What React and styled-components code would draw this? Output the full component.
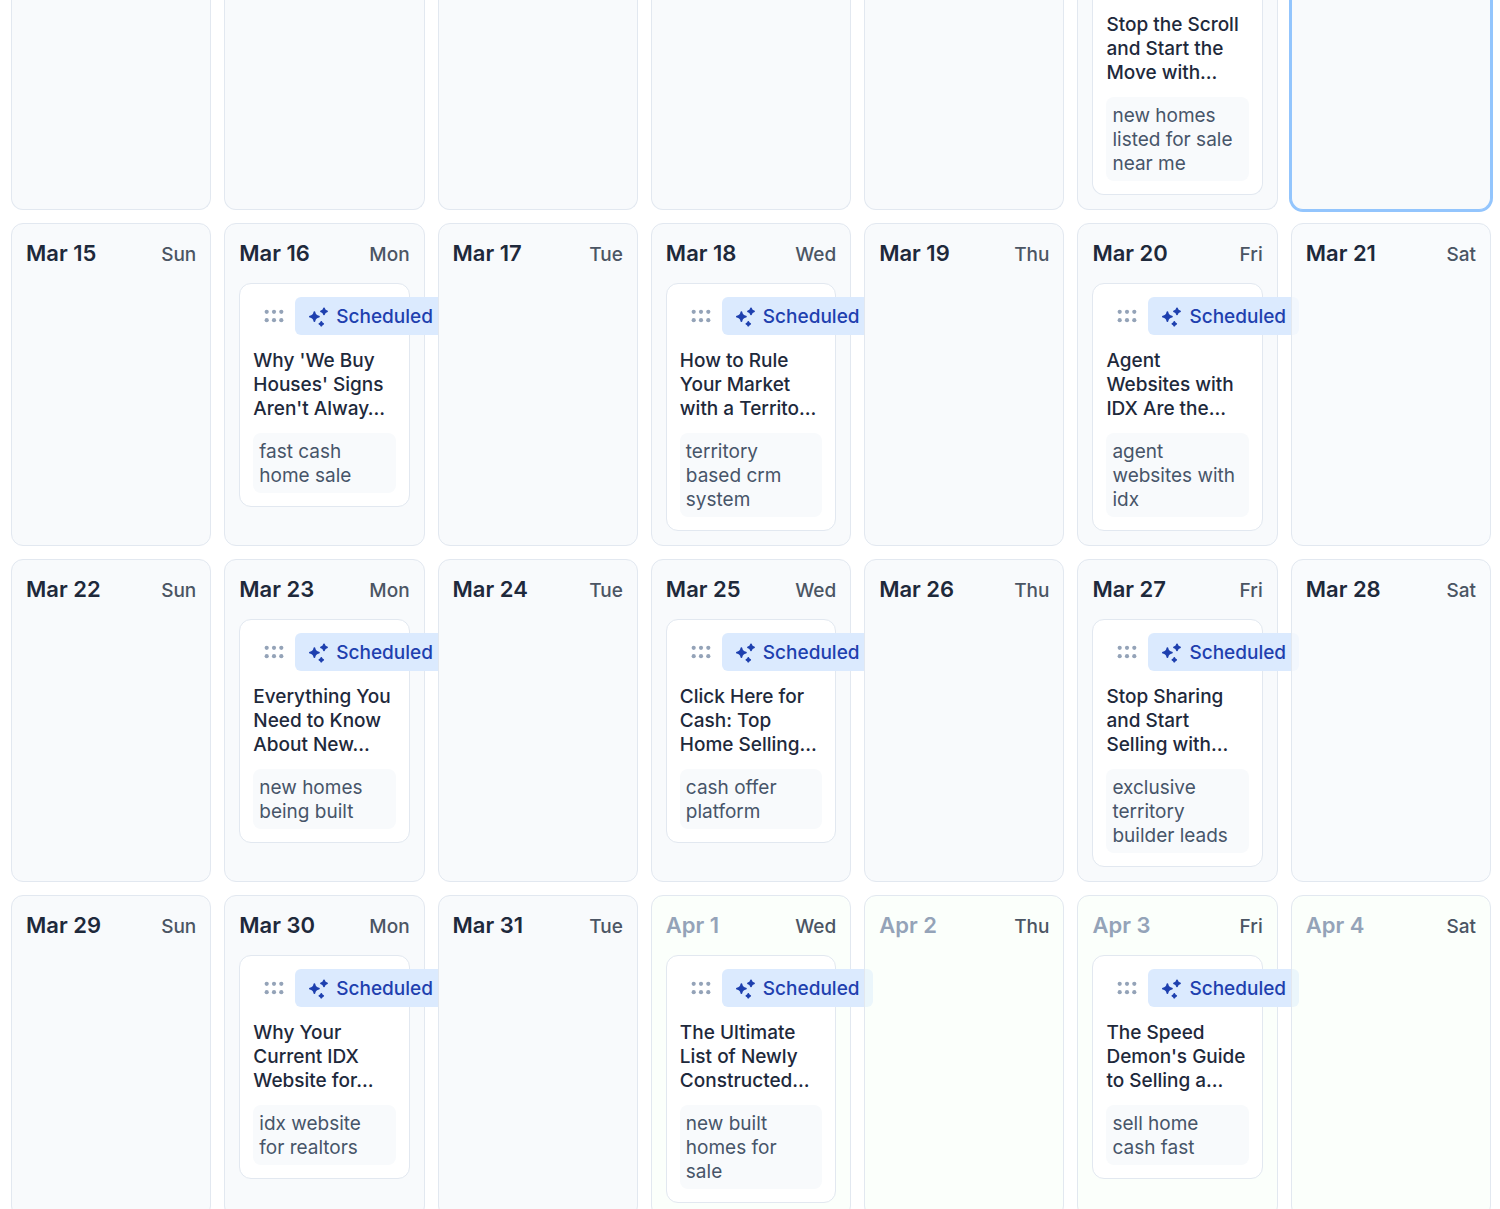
import React from 'react'
import styled, { createGlobalStyle } from 'styled-components'

const weeks = [
  [
    { date: 'Mar 15', day: 'Sun' },
    { date: 'Mar 16', day: 'Mon', post: { title: "Why 'We Buy Houses' Signs Aren't Alway…", keyword: 'fast cash home sale' } },
    { date: 'Mar 17', day: 'Tue' },
    { date: 'Mar 18', day: 'Wed', post: { title: 'How to Rule Your Market with a Territo…', keyword: 'territory based crm system' } },
    { date: 'Mar 19', day: 'Thu' },
    { date: 'Mar 20', day: 'Fri', post: { title: 'Agent Websites with IDX Are the…', keyword: 'agent websites with idx' } },
    { date: 'Mar 21', day: 'Sat' },
  ],
  [
    { date: 'Mar 22', day: 'Sun' },
    { date: 'Mar 23', day: 'Mon', post: { title: 'Everything You Need to Know About New…', keyword: 'new homes being built' } },
    { date: 'Mar 24', day: 'Tue' },
    { date: 'Mar 25', day: 'Wed', post: { title: 'Click Here for Cash: Top Home Selling…', keyword: 'cash offer platform' } },
    { date: 'Mar 26', day: 'Thu' },
    { date: 'Mar 27', day: 'Fri', post: { title: 'Stop Sharing and Start Selling with…', keyword: 'exclusive territory builder leads' } },
    { date: 'Mar 28', day: 'Sat' },
  ],
  [
    { date: 'Mar 29', day: 'Sun' },
    { date: 'Mar 30', day: 'Mon', post: { title: 'Why Your Current IDX Website for…', keyword: 'idx website for realtors' } },
    { date: 'Mar 31', day: 'Tue' },
    { date: 'Apr 1', day: 'Wed', next: true, post: { title: 'The Ultimate List of Newly Constructed…', keyword: 'new built homes for sale' } },
    { date: 'Apr 2', day: 'Thu', next: true },
    { date: 'Apr 3', day: 'Fri', next: true, post: { title: "The Speed Demon's Guide to Selling a…", keyword: 'sell home cash fast' } },
    { date: 'Apr 4', day: 'Sat', next: true },
  ],
]

// the week that is scrolled half out of view
const firstWeek = [
  { day: 'Sun' },
  { day: 'Mon' },
  { day: 'Tue' },
  { day: 'Wed' },
  { day: 'Thu' },
  { day: 'Fri', post: { title: 'Stop the Scroll and Start the Move with…', keyword: 'new homes listed for sale near me' } },
  { day: 'Sat', today: true },
]

function Sparkles() {
  return (
    <svg width="20" height="20" viewBox="0 0 20 20" fill="currentColor" stroke="currentColor" strokeWidth="1.8" strokeLinejoin="round" aria-hidden="true">
      <path d="M6.4 5.2Q7 9.1 10.9 9.7Q7 10.3 6.4 14.2Q5.8 10.3 1.9 9.7Q5.8 9.1 6.4 5.2Z" />
      <path d="M16 1.4Q16.5 3.9 19 4.4Q16.5 4.9 16 7.4Q15.5 4.9 13 4.4Q15.5 3.9 16 1.4Z" />
      <path d="M13.3 14.9Q13.7 16.4 15.2 16.8Q13.7 17.2 13.3 18.7Q12.9 17.2 11.4 16.8Q12.9 16.4 13.3 14.9Z" />
    </svg>
  )
}

function Grip() {
  return (
    <svg width="20" height="14" viewBox="0 0 20 14" fill="currentColor" aria-hidden="true">
      <circle cx="2.7" cy="2.8" r="2.1" />
      <circle cx="10" cy="2.8" r="2.1" />
      <circle cx="17.3" cy="2.8" r="2.1" />
      <circle cx="2.7" cy="11.2" r="2.1" />
      <circle cx="10" cy="11.2" r="2.1" />
      <circle cx="17.3" cy="11.2" r="2.1" />
    </svg>
  )
}

function PostCard({ post, cut }) {
  return (
    <Card $cut={cut}>
      {!cut && (
        <CardTop>
          <Handle type="button" aria-label="Move post"><Grip /></Handle>
          <Badge><Sparkles />Scheduled</Badge>
        </CardTop>
      )}
      <Title>{post.title}</Title>
      <Keyword>{post.keyword}</Keyword>
    </Card>
  )
}

function App() {
  return (
    <>
      <GlobalStyle />
      <Page>
        <Week>
          {firstWeek.map((cell) => (
            <CutDay key={cell.day} $today={cell.today}>
              {cell.post && <PostCard post={cell.post} cut />}
            </CutDay>
          ))}
        </Week>
        {weeks.map((week) => (
          <Week key={week[0].date}>
            {week.map((cell) => (
              <Day key={cell.date} $next={cell.next} $weekend={cell.day === 'Sat'}>
                <DayHeader>
                  <DateLabel $next={cell.next}>{cell.date}</DateLabel>
                  <DayName>{cell.day}</DayName>
                </DayHeader>
                {cell.post && <PostCard post={cell.post} />}
              </Day>
            ))}
          </Week>
        ))}
      </Page>
    </>
  )
}

export default App

const GlobalStyle = createGlobalStyle`
*{
  box-sizing:border-box;
}
body{
  margin:0;
  background:#ffffff;
  color:#1e293b;
  font-family:Inter,"Liberation Sans",sans-serif;
  font-size:19px;
  line-height:24px;
}
`

const Page = styled.main`
display:flex;
flex-direction:column;
gap:13px;
height:100vh;
overflow:hidden;
padding:0 9px 0 11px;
`

const Week = styled.section`
display:grid;
grid-template-columns:repeat(7,minmax(0,1fr));
gap:13px;
flex-shrink:0;
`

/* every day stacks over the one before it, so a wide badge slides under the next day */
const Day = styled.div`
position:relative;
min-width:0;
padding:13px 14px 14px;
border:1px solid #e2e8f0;
border-radius:12px;
background:${({ $next, $weekend }) => ($next ? 'rgba(247,255,248,0.55)' : $weekend ? 'rgba(248,250,252,0.8)' : '#f8fafc')};
`

const CutDay = styled(Day)`
padding-top:0;
border-top:0;
border-radius:0 0 12px 12px;
${({ $today }) => $today && `
border-color:#93c5fd;
box-shadow:0 0 0 2px #93c5fd;
`}
`

const DayHeader = styled.header`
display:flex;
align-items:baseline;
justify-content:space-between;
height:33px;
margin-bottom:13px;
padding-top:4px;
`

const DateLabel = styled.span`
font-size:22px;
font-weight:600;
color:${({ $next }) => ($next ? '#94a3b8' : '#1e293b')};
`

const DayName = styled.span`
font-weight:500;
color:#4b5563;
`

const Card = styled.article`
padding:13px;
border:1px solid #e2e8f0;
border-radius:12px;
background:#ffffff;
${({ $cut }) => $cut && `
border-top:0;
border-radius:0 0 12px 12px;
`}
`

const CardTop = styled.div`
display:flex;
align-items:center;
margin-bottom:14px;
`

const Handle = styled.button`
display:flex;
align-items:center;
justify-content:center;
flex:0 0 42px;
height:38px;
padding:0;
border:0;
background:none;
color:#94a3b8;
cursor:grab;
`

const Badge = styled.span`
display:flex;
align-items:center;
gap:8px;
flex-shrink:0;
height:38px;
padding:1px 13px 0;
border-radius:6px;
background:#dbeafe;
color:#1e40af;
font-weight:500;
`

const Title = styled.h3`
margin:0 0 12px;
font-size:19px;
font-weight:500;
line-height:24px;
`

const Keyword = styled.p`
margin:0;
padding:7px 6px 5px;
border-radius:8px;
background:#f8fafc;
color:#475569;
`
